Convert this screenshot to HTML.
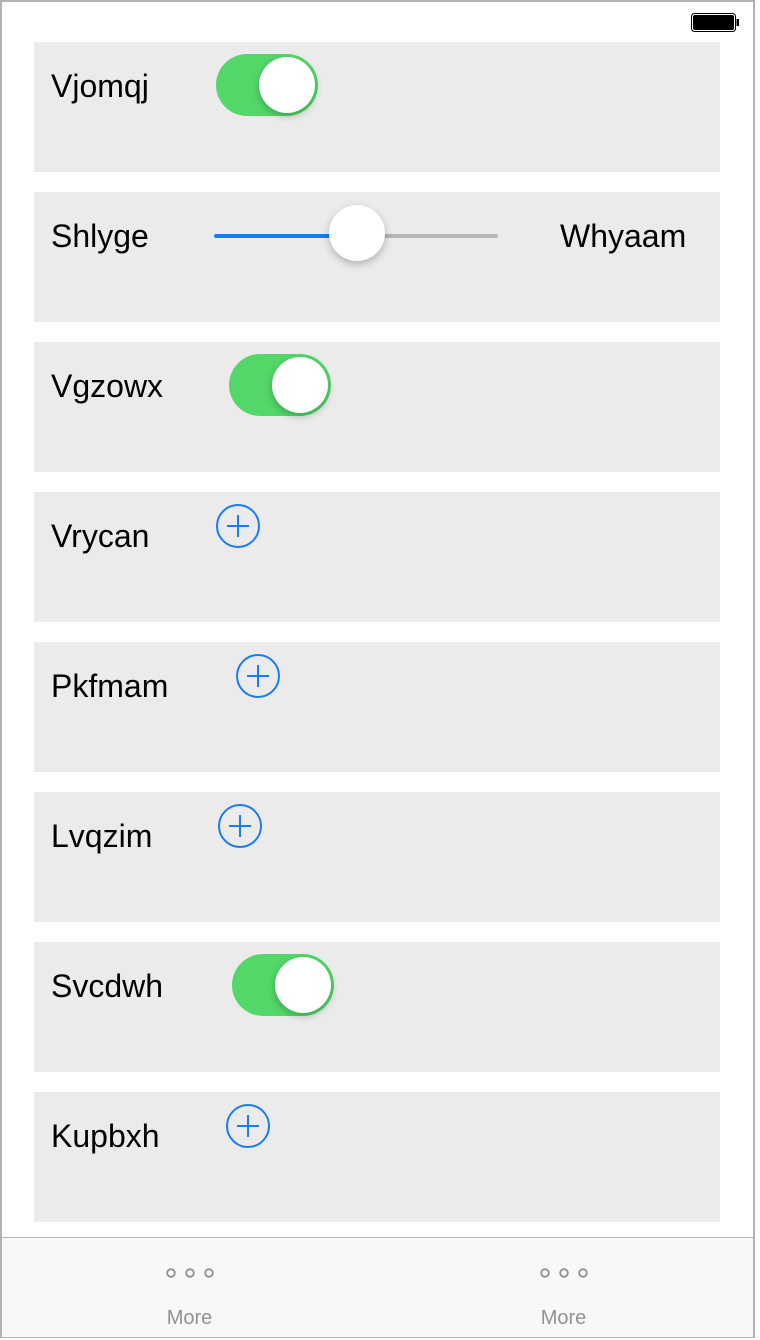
<!DOCTYPE html>
<html><head><style>
body{margin:0;width:760px;height:1340px;overflow:hidden;background:#fff;font-family:"Liberation Sans",sans-serif;}
.frame{position:absolute;left:0;top:0;width:751px;height:1334px;border:2px solid #b3b3b3;}
.card{position:absolute;left:34px;width:686px;height:130px;background:#ebebeb;}
.lbl{position:absolute;left:17px;top:26px;font-size:32px;line-height:36px;color:#000;}
.tog{position:absolute;top:12px;width:102px;height:62px;border-radius:31px;background:#53d769;}
.tog::after{content:"";position:absolute;right:3px;top:3px;width:56px;height:56px;border-radius:50%;background:#fff;box-shadow:0 3px 8px rgba(0,0,0,.25);}
.plus{position:absolute;top:12px;width:44px;height:44px;}
.tab{position:absolute;left:2px;top:1237px;width:751px;height:99px;background:#f8f8f8;border-top:1px solid #b3b3b3;}
.ti{position:absolute;top:0;width:375px;text-align:center;}
.dots{position:absolute;top:30px;left:50%;margin-left:-24px;width:48px;height:10px;}
.tl{position:absolute;top:69px;width:100%;font-size:20px;color:#929292;}
</style></head><body>
<div class="frame"></div>
<svg style="position:absolute;left:691px;top:13px" width="50" height="20"><rect x="0.5" y="0.5" width="44" height="18" rx="3" fill="#fff" stroke="#000"/><rect x="2" y="2" width="41" height="15" rx="2" fill="#000"/><rect x="45.5" y="6" width="2.5" height="7" fill="#000"/></svg>

<div class="card" style="top:42px"><div class="lbl">Vjomqj</div><div class="tog" style="left:182px"></div></div>
<div class="card" style="top:192px"><div class="lbl">Shlyge</div>
<div style="position:absolute;left:180px;top:42px;width:142px;height:4px;background:#1a7cf5;border-radius:2px"></div>
<div style="position:absolute;left:322px;top:42px;width:142px;height:4px;background:#b6b6b6;border-radius:2px"></div>
<div style="position:absolute;left:295px;top:13px;width:56px;height:56px;border-radius:50%;background:#fff;box-shadow:0 3px 8px rgba(0,0,0,.25)"></div>
<div class="lbl" style="left:526px">Whyaam</div></div>
<div class="card" style="top:342px"><div class="lbl">Vgzowx</div><div class="tog" style="left:195px"></div></div>
<div class="card" style="top:492px"><div class="lbl">Vrycan</div><svg class="plus" style="left:182px"><circle cx="22" cy="22" r="21" fill="none" stroke="#1a7cf5" stroke-width="2"/><path d="M11 22H33M22 11V33" stroke="#1a7cf5" stroke-width="2"/></svg></div>
<div class="card" style="top:642px"><div class="lbl">Pkfmam</div><svg class="plus" style="left:202px"><circle cx="22" cy="22" r="21" fill="none" stroke="#1a7cf5" stroke-width="2"/><path d="M11 22H33M22 11V33" stroke="#1a7cf5" stroke-width="2"/></svg></div>
<div class="card" style="top:792px"><div class="lbl">Lvqzim</div><svg class="plus" style="left:184px"><circle cx="22" cy="22" r="21" fill="none" stroke="#1a7cf5" stroke-width="2"/><path d="M11 22H33M22 11V33" stroke="#1a7cf5" stroke-width="2"/></svg></div>
<div class="card" style="top:942px"><div class="lbl">Svcdwh</div><div class="tog" style="left:198px"></div></div>
<div class="card" style="top:1092px"><div class="lbl">Kupbxh</div><svg class="plus" style="left:192px"><circle cx="22" cy="22" r="21" fill="none" stroke="#1a7cf5" stroke-width="2"/><path d="M11 22H33M22 11V33" stroke="#1a7cf5" stroke-width="2"/></svg></div>

<div class="tab">
<div class="ti" style="left:0"><svg class="dots"><circle cx="5" cy="5" r="3.8" fill="none" stroke="#929292" stroke-width="1.8"/><circle cx="24" cy="5" r="3.8" fill="none" stroke="#929292" stroke-width="1.8"/><circle cx="43" cy="5" r="3.8" fill="none" stroke="#929292" stroke-width="1.8"/></svg><div class="tl">More</div></div>
<div class="ti" style="left:374px"><svg class="dots"><circle cx="5" cy="5" r="3.8" fill="none" stroke="#929292" stroke-width="1.8"/><circle cx="24" cy="5" r="3.8" fill="none" stroke="#929292" stroke-width="1.8"/><circle cx="43" cy="5" r="3.8" fill="none" stroke="#929292" stroke-width="1.8"/></svg><div class="tl">More</div></div>
</div>
</body></html>
